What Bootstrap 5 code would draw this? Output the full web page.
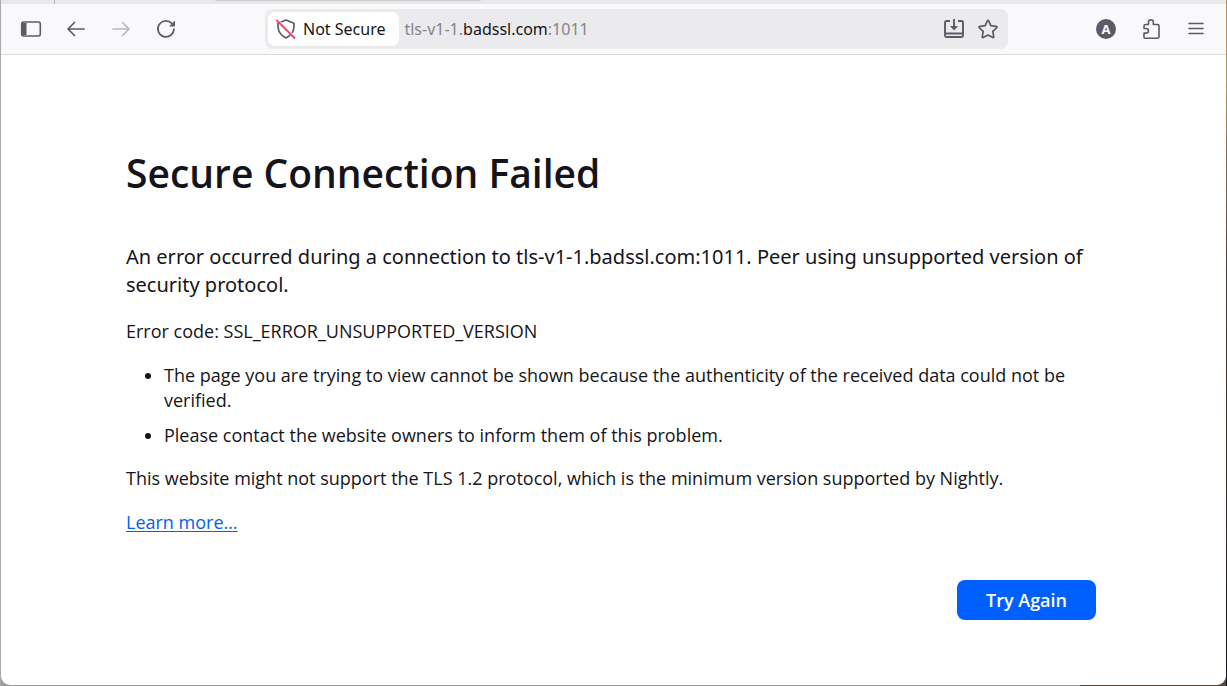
<!DOCTYPE html>
<html lang="en">
<head>
<meta charset="utf-8">
<meta name="viewport" content="width=device-width, initial-scale=1">
<title>Secure Connection Failed</title>
<link href="https://cdn.jsdelivr.net/npm/bootstrap@5.3.0/dist/css/bootstrap.min.css" rel="stylesheet">
<style>
body{font-family:"Open Sans","Noto Sans",sans-serif;color:#15141a;background:linear-gradient(90deg,#9b9b9b 88%,#54483f 88%)}
.desktop-edge{background:linear-gradient(180deg,#b48e5c 12%,#4a3a30 40%,#17161b 100%) right/1px 100% no-repeat,linear-gradient(#a9a9ac,#a9a9ac) left/1px 100% no-repeat;padding:0 1px 1px}
.browser-window{background:#fff;border-radius:0 0 9px 9px;overflow:hidden}
.tab-strip{height:4px;background:#e9e9eb}
.tab-start{width:54px;border-right:1px solid #b5b5b8}
.tab-idle{width:266px;height:1px;margin-left:160px;background:#cdcdd0;border-radius:0 0 4px 4px}
.toolbar{height:51px;background:#f9f9fb;border-bottom:1px solid #dcdcde;padding:0 18px}
.tool{width:24px;height:24px;padding:0;border:0;background:none;color:#5b5b66;display:flex;align-items:center;justify-content:center}
.tool:disabled{color:#b9b9bf}
.nav-tools{gap:21px;width:246px}
.address{height:40px;background:#ebebed;border-radius:8px;padding:3px 8px 3px 3px;flex:0 1 743px}
.identity{height:34px;border:0;border-radius:7px;background:#fff;padding:0 14px 0 7px;gap:6px;font-family:"Noto Sans",sans-serif;font-size:16px;color:#15141a}
.url{font-family:"Noto Sans",sans-serif;font-size:16px;color:#858589;outline:0;margin-left:5px}
.url span{color:#15141a}
.page-tools{gap:10px}
.end-tools{gap:21px;margin-left:auto}
.error-page{padding:92px 130px 64px 125px;font-size:18px;line-height:25px}
.error-title{font-size:39px;line-height:52px;font-weight:600;margin-bottom:44px}
.error-lead{font-family:"Noto Sans",sans-serif;font-size:20px;line-height:28px;margin-bottom:20px}
.error-page .gap-below{margin-bottom:19px}
.error-list{padding-left:38px;margin-bottom:18px}
.error-list li+li{margin-top:10px}
.error-page a{color:#0061f0;text-underline-offset:2px}
.retry-row{margin-top:45px}
.retry{width:139px;height:40px;background:#0060ff;color:#fff;border-radius:8px;font-size:18px;font-weight:600;padding:0}
.retry:hover{background:#0250bb;color:#fff}
</style>
</head>
<body>
<div class="desktop-edge min-vh-100 d-flex">
<div class="browser-window d-flex flex-column flex-grow-1">
  <div class="tab-strip d-flex"><div class="tab-start"></div><div class="tab-idle"></div></div>
  <nav class="toolbar d-flex align-items-center" aria-label="Browser toolbar">
    <div class="nav-tools d-flex flex-shrink-0">
      <button class="tool" aria-label="Sidebar"><svg width="22" height="18" viewBox="0 0 22 18"><rect x="1.7" y="2" width="18.6" height="14" rx="2" fill="none" stroke="currentColor" stroke-width="1.6"/><path d="M2 3h4.500v12H2z" fill="currentColor"/></svg></button>
      <button class="tool" aria-label="Back"><svg width="20" height="20" viewBox="0 0 20 20" fill="none" stroke="currentColor" stroke-width="1.7" stroke-linecap="round" stroke-linejoin="round"><path d="M18 10H2M8.500 3.500 2 10l6.500 6.500"/></svg></button>
      <button class="tool" aria-label="Forward" disabled><svg width="20" height="20" viewBox="0 0 20 20" fill="none" stroke="currentColor" stroke-width="1.7" stroke-linecap="round" stroke-linejoin="round"><path d="M2 10h16M11.500 3.500 18 10l-6.500 6.500"/></svg></button>
      <button class="tool" aria-label="Reload"><svg width="20" height="20" viewBox="0 0 20 20"><path d="M17.900 10A8 8 0 1 1 15.500 4.200" fill="none" stroke="currentColor" stroke-width="1.7" stroke-linecap="round"/><path d="M19 1.500V7.400H13z" fill="currentColor"/></svg></button>
    </div>
    <div class="address d-flex align-items-center">
      <button class="identity d-flex align-items-center flex-shrink-0"><svg width="22" height="22" viewBox="0 0 22 22" fill="none" stroke-width="1.7"><path d="M11 2 19 5.200V8c0 5-3 9.500-8 12-5-2.500-8-7-8-12V5.200z" stroke="#5b5b66" stroke-linejoin="round"/><path d="M3 2l18 18" stroke="#fff" stroke-width="1.500"/><path d="M1.500 2 20 20.500" stroke="#f0466e" stroke-width="1.900"/></svg>Not Secure</button>
      <div class="url flex-grow-1 text-nowrap" role="textbox" aria-label="Address" contenteditable="true" spellcheck="false">tls-v1-1.<span>badssl.com</span>:1011</div>
      <div class="page-tools d-flex flex-shrink-0">
        <button class="tool" aria-label="Install page"><svg width="22" height="22" viewBox="0 0 22 22" fill="none" stroke="currentColor" stroke-width="1.900"><path d="M7 3H3.500A1.500 1.500 0 0 0 2 4.500v13A1.500 1.500 0 0 0 3.500 19h15a1.500 1.500 0 0 0 1.500-1.500v-13A1.500 1.500 0 0 0 18.500 3H15M2 15.500h18M11 1v9"/><path d="m7 8 4 4.500L15 8z" fill="currentColor" stroke="none"/></svg></button>
        <button class="tool" aria-label="Bookmark"><svg width="22" height="22" viewBox="0 0 22 22" fill="none" stroke="currentColor" stroke-width="1.700" stroke-linejoin="round"><path d="M10.200 3.200q.8-1.600 1.600 0l2 4.400 5.200.7q1.800.3.500 1.600l-3.700 3.500.9 5q.2 1.700-1.300.9L11 16.900l-4.400 2.400q-1.500.8-1.300-.9l.9-5-3.700-3.500Q1.200 8.600 3 8.300l5.200-.7z"/></svg></button>
      </div>
    </div>
    <div class="end-tools d-flex flex-shrink-0">
      <button class="tool" aria-label="Account"><svg width="20" height="20" viewBox="0 0 20 20"><circle cx="10" cy="10" r="10" fill="currentColor"/><text x="10" y="14.500" text-anchor="middle" font-size="13" font-weight="700" fill="#f9f9fb">A</text></svg></button>
      <button class="tool" aria-label="Extensions"><svg width="20" height="22" viewBox="0 0 20 22" fill="none" stroke="currentColor" stroke-width="1.600" stroke-linejoin="round"><path d="M4 20.200h12.500a1.500 1.500 0 0 0 1.500-1.500V8a1.500 1.500 0 0 0-1.500-1.500H12.300V4.200a2.400 2.400 0 0 0-4.800 0v2.300H4.500A1.500 1.500 0 0 0 3 8v2.500h2.200a2.300 2.300 0 0 1 0 4.600H3v4.100a1 1 0 0 0 1 1z"/></svg></button>
      <button class="tool" aria-label="Menu"><svg width="20" height="20" viewBox="0 0 20 20" stroke="currentColor" stroke-width="1.600" stroke-linecap="round"><path d="M3 4.500h14M3 9.500h14M3 14.500h14"/></svg></button>
    </div>
  </nav>
  <main class="error-page">
    <h1 class="error-title">Secure Connection Failed</h1>
    <p class="error-lead">An error occurred during a connection to tls-v1-1.badssl.com:1011. Peer using unsupported version of security protocol.</p>
    <p class="gap-below">Error code: SSL_ERROR_UNSUPPORTED_VERSION</p>
    <ul class="error-list">
      <li>The page you are trying to view cannot be shown because the authenticity of the received data could not be verified.</li>
      <li>Please contact the website owners to inform them of this problem.</li>
    </ul>
    <p class="gap-below">This website might not support the TLS 1.2 protocol, which is the minimum version supported by Nightly.</p>
    <p class="mb-0"><a href="#">Learn more…</a></p>
    <div class="retry-row d-flex justify-content-end"><button class="btn retry">Try Again</button></div>
  </main>
</div>
</div>
<script src="https://cdn.jsdelivr.net/npm/bootstrap@5.3.0/dist/js/bootstrap.bundle.min.js"></script>
</body>
</html>
